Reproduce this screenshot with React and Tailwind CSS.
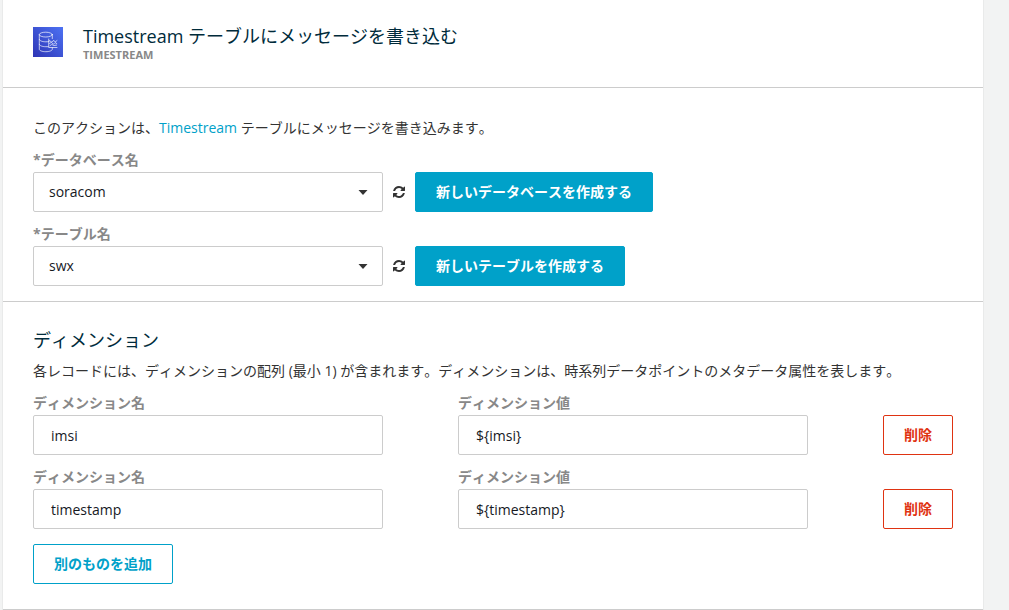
import React, { useState } from 'react';

const TimestreamLogo = () => (
  <svg viewBox="0 0 30 30" className="w-[30px] h-[30px] shrink-0" aria-hidden="true">
    <defs>
      <linearGradient id="logo-bg" x1="0" y1="1" x2="1" y2="0">
        <stop offset="0" stopColor="#2e35b5" />
        <stop offset="1" stopColor="#4d72f3" />
      </linearGradient>
    </defs>
    <rect width="30" height="30" fill="url(#logo-bg)" />
    <g fill="none" stroke="#fff" strokeOpacity="0.85" strokeWidth="0.8" strokeLinecap="round" strokeLinejoin="round">
      <ellipse cx="12.8" cy="7.6" rx="6.5" ry="2.4" />
      <path d="M6.3 7.6v14.6c0 1.4 2.9 2.5 6.5 2.5s6.5-1.1 6.5-2.5v-1.4" />
      <path d="M19.3 7.6v4" />
      <path d="M6.3 12.4c0 1.3 2.9 2.4 6.5 2.4 1.2 0 2.3-.1 3.2-.3" />
      <path d="M6.3 17.3c0 1.3 2.9 2.4 6.5 2.4h2.4" />
      <path d="M15.7 12v8.5h8.3" />
      <path d="M16.5 13.6l2.2 1.4 2.2-1.6 1.3 1.6 1.8-1.4" />
      <path d="M16.5 16.4l1.8-1 2.2 1.8 1.6-1.6 1.7 1" />
      <path d="M17 18.6l1.8-1.1 2 1 2.8-.4" />
    </g>
  </svg>
);

const RefreshIcon = () => (
  <svg viewBox="0 128 1536 1536" className="w-3 h-3" fill="currentColor" aria-hidden="true">
    <path d="M1511 1056q0 5-1 7-64 268-268 434.5t-478 166.5q-146 0-282.5-55t-243.5-157l-129 129q-19 19-45 19t-45-19-19-45v-448q0-26 19-45t45-19h448q26 0 45 19t19 45-19 45l-137 137q71 66 161 102t187 36q134 0 250-65t186-179q11-17 53-117 8-23 30-23h192q13 0 22.5 9.5t9.5 22.5zm25-800v448q0 26-19 45t-45 19h-448q-26 0-45-19t-19-45 19-45l138-138q-148-137-349-137-134 0-250 65t-186 179q-11 17-53 117-8 23-30 23h-199q-13 0-22.5-9.5t-9.5-22.5v-7q65-268 270-434.5t480-166.5q146 0 284 55.5t245 156.5l130-129q19-19 45-19t45 19 19 45z" />
  </svg>
);

const labelClass = 'block text-sm leading-6 font-bold text-[#888]';

const SelectField = ({ id, label, options, createLabel }) => (
  <div>
    <label htmlFor={id} className={labelClass}>*{label}</label>
    <div className="flex items-center gap-2.5">
      <div className="relative w-full max-w-[350px]">
        <select
          id={id}
          className="block w-full h-10 pl-[15px] pr-8 appearance-none bg-white border border-[#ccc] rounded-xs text-sm text-[#16191f]"
        >
          {options.map((o) => (
            <option key={o}>{o}</option>
          ))}
        </select>
        <svg
          viewBox="0 0 10 5"
          className="absolute right-[15px] top-[18px] w-2.5 h-[5px] text-[#333] pointer-events-none"
          fill="currentColor"
          aria-hidden="true"
        >
          <path d="M0.5 0h9L5 5z" />
        </svg>
      </div>
      <button type="button" aria-label="更新" className="shrink-0 text-[#333]">
        <RefreshIcon />
      </button>
      <button
        type="button"
        className="h-10 px-5 shrink-0 border border-[#00a1c9] bg-[#00a1c9] rounded-xs text-sm font-bold text-white"
      >
        {createLabel}
      </button>
    </div>
  </div>
);

const TextField = ({ id, label, value, onChange }) => (
  <div>
    <label htmlFor={id} className={labelClass}>{label}</label>
    <input
      id={id}
      type="text"
      value={value}
      onChange={(e) => onChange(e.target.value)}
      className="block w-full h-10 px-[17px] bg-white border border-[#ccc] rounded-xs text-sm text-[#16191f]"
    />
  </div>
);

export default function App() {
  const [dimensions, setDimensions] = useState([
    { id: 1, name: 'imsi', value: '${imsi}' },
    { id: 2, name: 'timestamp', value: '${timestamp}' },
  ]);

  const update = (id, key, val) => {
    setDimensions((prev) => prev.map((d) => (d.id === id ? { ...d, [key]: val } : d)));
  };

  const addDimension = () => {
    setDimensions((prev) => [...prev, { id: Date.now(), name: '', value: '' }]);
  };

  const removeDimension = (id) => {
    setDimensions((prev) => prev.filter((d) => d.id !== id));
  };

  return (
    <div className="min-h-screen bg-[#f2f3f3] pl-[3px] pr-[26px] font-['Open_Sans','Noto_Sans_CJK_JP',sans-serif] [font-kerning:none] text-sm text-[#333]">
      <main className="bg-white min-h-screen shadow-[0_0_1px_#bbb]">
        <header className="flex items-start gap-5 px-[30px] pt-[27px] pb-6 border-b border-[#ccc]">
          <TimestreamLogo />
          <div className="flex flex-col gap-0.5">
            <h1 className="text-lg leading-[18px] text-[#002b3b]">Timestream テーブルにメッセージを書き込む</h1>
            <p className="text-[11px] leading-4 font-bold text-[#888]">TIMESTREAM</p>
          </div>
        </header>

        <section className="flex flex-col gap-2.5 px-[30px] pt-[30px] pb-[15px] border-b border-[#ccc]">
          <p className="leading-5">
            このアクションは、<a href="#timestream" className="text-[#00a1c9]">Timestream</a> テーブルにメッセージを書き込みます。
          </p>
          <SelectField
            id="database"
            label="データベース名"
            options={['soracom']}
            createLabel="新しいデータベースを作成する"
          />
          <SelectField
            id="table"
            label="テーブル名"
            options={['swx']}
            createLabel="新しいテーブルを作成する"
          />
        </section>

        <section className="px-[30px] pt-[26px] pb-[25px] border-b border-[#ccc]">
          <h2 className="text-lg leading-6 text-[#002b3b]">ディメンション</h2>
          <p className="mt-[9px] leading-5">
            各レコードには、ディメンションの配列 (最小 1) が含まれます。ディメンションは、時系列データポイントのメタデータ属性を表します。
          </p>
          <div className="flex flex-col gap-2.5 mt-2.5">
            {dimensions.map((d) => (
              <div key={d.id} className="grid grid-cols-[1fr_1fr_70px] gap-x-[75px] items-end">
                <TextField
                  id={`name-${d.id}`}
                  label="ディメンション名"
                  value={d.name}
                  onChange={(v) => update(d.id, 'name', v)}
                />
                <TextField
                  id={`value-${d.id}`}
                  label="ディメンション値"
                  value={d.value}
                  onChange={(v) => update(d.id, 'value', v)}
                />
                <button
                  type="button"
                  onClick={() => removeDimension(d.id)}
                  className="h-10 border border-[#df3312] bg-white rounded-xs text-sm font-bold text-[#df3312]"
                >
                  削除
                </button>
              </div>
            ))}
          </div>
          <button
            type="button"
            onClick={addDimension}
            className="h-10 mt-[15px] px-5 border border-[#00a1c9] bg-white rounded-xs text-sm font-bold text-[#00a1c9]"
          >
            別のものを追加
          </button>
        </section>
      </main>
    </div>
  );
}
